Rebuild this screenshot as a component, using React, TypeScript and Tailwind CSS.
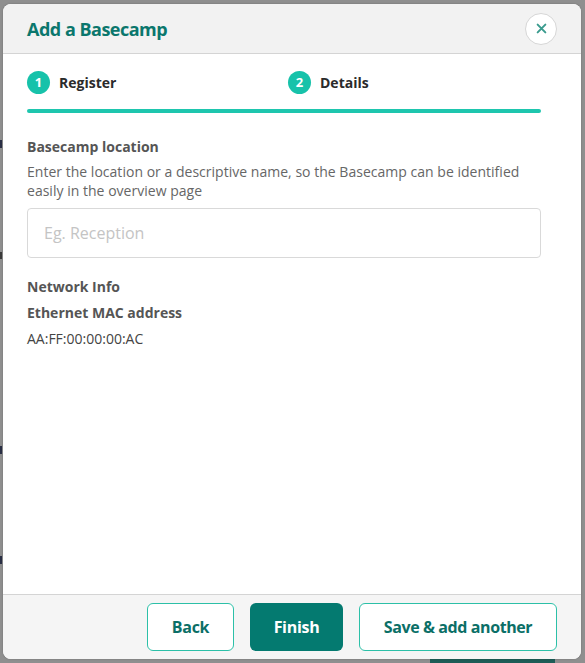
import React from "react";

export default function App() {
  const font = { fontFamily: '"Open Sans", "Noto Sans", sans-serif' };
  return (
    <div
      className="relative w-[585px] h-[663px] overflow-hidden bg-[#8f8f8f] pt-[4px] pl-[3px]"
      style={font}
    >
      <div className="absolute left-[430px] top-[655px] w-[125px] h-[10px] bg-[#1d5d57]" />
      <div className="absolute left-0 top-[140px] w-[2px] h-[8px] bg-[#2a2f45]" />
      <div className="absolute left-0 top-[252px] w-[2px] h-[7px] bg-[#3a3a3a]" />
      <div className="absolute left-0 top-[446px] w-[2px] h-[8px] bg-[#2a2f45]" />
      <div className="absolute left-0 top-[556px] w-[2px] h-[8px] bg-[#2a2f45]" />
      <div className="relative w-[578px] h-[655px] rounded-lg overflow-hidden flex flex-col bg-white shadow-[0_0_2px_rgba(0,0,0,0.25)]">
        <div className="h-[50px] shrink-0 bg-[#f2f2f2] border-b border-[#d4d4d4] flex items-center justify-between pl-6 pr-[24px]">
          <h1 className="mt-[2px] text-[18px] font-bold text-[#0b776d] tracking-[-0.5px]">Add a Basecamp</h1>
          <button className="w-[32px] h-[32px] rounded-full bg-white border border-[#d6d6d6] flex items-center justify-center text-[#2a9d8f]">
            <svg width="11" height="11" viewBox="0 0 10 10" fill="none">
              <path d="M1.5 1.5 L8.5 8.5 M8.5 1.5 L1.5 8.5" stroke="#3a9b8e" strokeWidth="1.8" strokeLinecap="round" />
            </svg>
          </button>
        </div>
        <div className="flex-1 px-6 pt-[17px]">
          <div className="flex">
            <div className="flex items-center gap-[9px] w-[261px]">
              <span className="w-[23px] h-[23px] rounded-full bg-[#17c2aa] text-white text-[13px] font-bold flex items-center justify-center">1</span>
              <span className="text-[14px] font-bold text-[#2b2b2b]">Register</span>
            </div>
            <div className="flex items-center gap-[9px]">
              <span className="w-[23px] h-[23px] rounded-full bg-[#17c2aa] text-white text-[13px] font-bold flex items-center justify-center">2</span>
              <span className="text-[14px] font-bold text-[#2b2b2b]">Details</span>
            </div>
          </div>
          <div className="mt-[15px] h-[4px] w-[514px] rounded-full bg-[#1ec6ae]" />
          <div className="mt-[24px] text-[14px] font-bold text-[#555] leading-[20px]">Basecamp location</div>
          <p className="mt-[5px] text-[14px] text-[#666] leading-[19px] tracking-[0.02px]">
            Enter the location or a descriptive name, so the Basecamp can be identified
            <br />
            easily in the overview page
          </p>
          <input
            className="mt-[8px] w-[514px] h-[50px] rounded-[4px] border border-[#d9d9d9] px-4 text-[16px] text-[#444] placeholder:text-[#c4c4c4] outline-none"
            placeholder="Eg. Reception"
            style={font}
          />
          <div className="mt-[19px] text-[14px] font-bold text-[#555] leading-[20px]">Network Info</div>
          <div className="mt-[6px] text-[14px] font-bold text-[#555] leading-[20px]">Ethernet MAC address</div>
          <div className="mt-[6px] text-[14px] text-[#444] leading-[20px]">AA:FF:00:00:00:AC</div>
        </div>
        <div className="h-[65px] shrink-0 bg-[#f5f5f5] border-t border-[#d4d4d4] flex items-center justify-end gap-4 pr-6">
          <button className="h-[48px] w-[87px] rounded-[6px] border border-[#2cc0a8] bg-white text-[16px] font-bold text-[#0b6f67] tracking-[-0.3px]">Back</button>
          <button className="h-[48px] w-[93px] rounded-[6px] bg-[#047a70] text-[16px] font-bold text-white tracking-[-0.3px]">Finish</button>
          <button className="h-[48px] w-[198px] rounded-[6px] border border-[#2cc0a8] bg-white text-[16px] font-bold text-[#0b6f67] tracking-[-0.4px]">Save &amp; add another</button>
        </div>
      </div>
    </div>
  );
}
